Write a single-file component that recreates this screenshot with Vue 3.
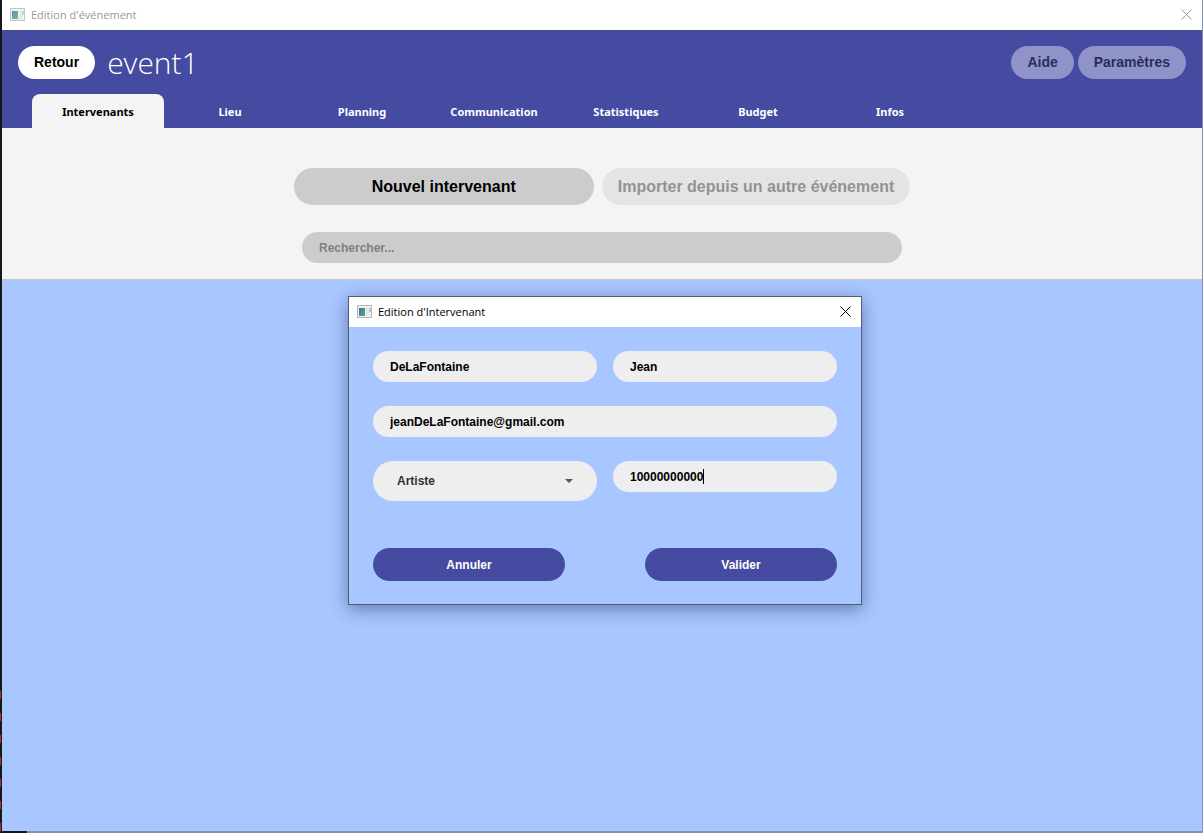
<template>
    <div class="desktop">
        <main class="window">
            <header class="titlebar">
                <svg class="app-icon" viewBox="0 0 15 13" aria-hidden="true">
                    <rect x="0" y="0" width="15" height="13" fill="#b4b8bd" />
                    <rect x="1" y="1" width="13" height="11" fill="#eef0f2" />
                    <rect x="2" y="3" width="6" height="8" fill="url(#app-icon-fill)" />
                    <rect x="9" y="3" width="3" height="8" fill="#e2e4e6" />
                    <rect x="12" y="3" width="2" height="4" fill="#a9d4c0" />
                    <defs>
                        <linearGradient id="app-icon-fill" x1="0" y1="0" x2="1" y2="1">
                            <stop offset="0" stop-color="#3f6f9c" />
                            <stop offset="1" stop-color="#5aa583" />
                        </linearGradient>
                    </defs>
                </svg>
                <span class="titlebar-text">Edition d'événement</span>
                <button class="close" type="button" aria-label="Fermer">
                    <svg viewBox="0 0 11 11" aria-hidden="true"><path d="M.5 .5L10.5 10.5M10.5 .5L.5 10.5" /></svg>
                </button>
            </header>

            <section class="banner">
                <div class="banner-row">
                    <button class="pill" type="button">Retour</button>
                    <h1>event1</h1>
                    <div class="banner-actions">
                        <button class="pill" type="button" disabled>Aide</button>
                        <button class="pill" type="button" disabled>Paramètres</button>
                    </div>
                </div>
                <nav class="tabs">
                    <a v-for="tab in tabs" :key="tab" href="#" :class="{ active: tab === activeTab }" @click.prevent="activeTab = tab">{{ tab }}</a>
                </nav>
            </section>

            <section class="toolbar">
                <div class="toolbar-buttons">
                    <button class="action action-new" type="button">Nouvel intervenant</button>
                    <button class="action" type="button" disabled>Importer depuis un autre événement</button>
                </div>
                <input class="search" type="search" v-model="search" placeholder="Rechercher..." aria-label="Rechercher" />
            </section>

            <section class="content"></section>
        </main>

        <section class="dialog" role="dialog" aria-labelledby="dialog-title">
            <header class="titlebar">
                <svg class="app-icon" viewBox="0 0 15 13" aria-hidden="true">
                    <rect x="0" y="0" width="15" height="13" fill="#b4b8bd" />
                    <rect x="1" y="1" width="13" height="11" fill="#eef0f2" />
                    <rect x="2" y="3" width="6" height="8" fill="url(#app-icon-fill)" />
                    <rect x="9" y="3" width="3" height="8" fill="#e2e4e6" />
                    <rect x="12" y="3" width="2" height="4" fill="#a9d4c0" />
                </svg>
                <span id="dialog-title" class="titlebar-text">Edition d'Intervenant</span>
                <button class="close" type="button" aria-label="Fermer">
                    <svg viewBox="0 0 11 11" aria-hidden="true"><path d="M.5 .5L10.5 10.5M10.5 .5L.5 10.5" /></svg>
                </button>
            </header>
            <form class="form" @submit.prevent>
                <input class="field" v-model="form.nom" type="text" aria-label="Nom" />
                <input class="field" v-model="form.prenom" type="text" aria-label="Prénom" />
                <input class="field field-wide" v-model="form.email" type="email" aria-label="Email" />
                <div class="select-box">
                    <select v-model="form.role" aria-label="Rôle">
                        <option>Artiste</option>
                    </select>
                    <svg viewBox="0 0 8 4" aria-hidden="true"><path d="M0 0H8L4 4Z" /></svg>
                </div>
                <div class="phone">
                    <input class="field" v-model="form.telephone" type="tel" aria-label="Téléphone" />
                    <span class="caret" :style="{ left: `calc(17px + ${form.telephone.length}ch)` }"></span>
                </div>
                <div class="form-actions">
                    <button type="button">Annuler</button>
                    <button type="submit">Valider</button>
                </div>
            </form>
        </section>
    </div>
</template>

<script setup>
import { ref, reactive } from 'vue';

const tabs = ['Intervenants', 'Lieu', 'Planning', 'Communication', 'Statistiques', 'Budget', 'Infos'];
const activeTab = ref('Intervenants');
const search = ref('');

const form = reactive({
    nom: 'DeLaFontaine',
    prenom: 'Jean',
    email: 'jeanDeLaFontaine@gmail.com',
    role: 'Artiste',
    telephone: '10000000000',
});
</script>

<style>
body {
    margin: 0;
}
</style>

<style scoped>
* {
    box-sizing: border-box;
}

.desktop {
    position: relative;
    display: flex;
    min-height: 100vh;
    padding: 0 1px 2px 2px;
    font-family: "Liberation Sans", Arial, sans-serif;
    /* terminal derrière la fenêtre : texte rouge à gauche, bord gris-bleu en bas */
    background:
        repeating-linear-gradient(#a83330 0 8px, #17171d 8px 22px) 0 100% / 1px 142px no-repeat,
        linear-gradient(#17171d, #17171d) 0 100% / 27px 2px no-repeat,
        linear-gradient(#8492b0, #8492b0) 0 100% / 100% 2px no-repeat,
        linear-gradient(#8492b0, #8492b0) 100% 0 / 1px 100% no-repeat,
        #17171d;
}

button,
input,
select {
    margin: 0;
    border: 0;
    font-family: inherit;
    font-weight: bold;
    outline: none;
}

.window {
    flex: 1;
    display: flex;
    flex-direction: column;
    background: #a8c6ff;
}

.titlebar {
    display: flex;
    align-items: center;
    height: 30px;
    padding: 0 10px 2px 8px;
    background: #fff;
    color: #999;
    font-family: "Open Sans", "Segoe UI", sans-serif;
    font-size: 11px;
}

.app-icon {
    width: 15px;
    height: 13px;
    margin-right: 6px;
}

.window > .titlebar .app-icon {
    opacity: 0.8;
}

.titlebar-text {
    flex: 1;
}

.close {
    display: flex;
    padding: 0;
    background: none;
    color: inherit;
}

.close svg {
    width: 11px;
    height: 11px;
    fill: none;
    stroke: currentColor;
}

.banner {
    padding: 16px 16px 0;
    background: #454ba1;
}

.banner-row {
    display: flex;
    align-items: center;
    height: 33px;
}

.pill {
    height: 33px;
    padding: 0 16px 1px;
    border-radius: 17px;
    background: #fff;
    color: #000;
    font-size: 14px;
}

.pill:disabled {
    background: #8f93c8;
    color: #292d61;
}

h1 {
    margin: 0 0 0 12px;
    color: #fff;
    font-family: "Open Sans", "Segoe UI", sans-serif;
    font-size: 30px;
    font-weight: 300;
}

.banner-actions {
    display: flex;
    gap: 4px;
    margin-left: auto;
}

.tabs {
    display: flex;
    padding: 15px 14px 0;
}

.tabs a {
    width: 132px;
    height: 34px;
    border-radius: 8px 8px 0 0;
    color: #fff;
    font-family: "Noto Sans", "Segoe UI", sans-serif;
    font-size: 11px;
    font-weight: bold;
    line-height: 35px;
    text-align: center;
    text-decoration: none;
}

.tabs a.active {
    background: #f4f4f4;
    color: #000;
}

.toolbar {
    display: flex;
    flex-direction: column;
    align-items: center;
    gap: 27px;
    padding: 40px 16px 16px;
    border-bottom: 1px solid #c8c8c8;
    background: #f4f4f4;
}

.toolbar-buttons {
    display: flex;
    gap: 8px;
}

.action {
    height: 37px;
    padding: 0 16px;
    border-radius: 19px;
    background: #ccc;
    color: #000;
    font-size: 16px;
}

.action-new {
    width: 300px;
}

.action:disabled {
    background: #e4e4e4;
    color: #929292;
}

.search {
    width: 600px;
    max-width: 100%;
    height: 31px;
    padding: 0 17px;
    border-radius: 16px;
    background: #ccc;
    font-size: 12px;
    appearance: none;
}

.search::placeholder {
    color: #808080;
    opacity: 1;
}

.content {
    flex: 1;
}

.dialog {
    position: absolute;
    top: 296px;
    left: 348px;
    width: 514px;
    border: 1px solid #535c72;
    background: #a8c6ff;
    box-shadow: 0 4px 16px rgba(20, 30, 70, 0.45);
}

.dialog .titlebar {
    color: #000;
}

.form {
    display: grid;
    grid-template-columns: 1fr 1fr;
    align-items: start;
    gap: 24px 16px;
    padding: 24px 24px 23px;
}

.field {
    display: block;
    width: 100%;
    height: 31px;
    padding: 0 17px;
    border-radius: 16px;
    background: #eee;
    color: #000;
    font-size: 12px;
}

.field-wide {
    grid-column: 1 / -1;
}

.select-box {
    position: relative;
}

.select-box select {
    width: 100%;
    height: 40px;
    padding: 0 24px;
    border-radius: 20px;
    background: #eee;
    color: #333;
    font-size: 12px;
    appearance: none;
}

.select-box svg {
    position: absolute;
    top: 18px;
    right: 24px;
    width: 8px;
    height: 4px;
    fill: #555;
    pointer-events: none;
}

.phone {
    position: relative;
    font-size: 12px;
    font-weight: bold;
}

.caret {
    position: absolute;
    top: 8px;
    width: 1px;
    height: 15px;
    background: #000;
}

.form-actions {
    display: flex;
    grid-column: 1 / -1;
    justify-content: space-between;
    padding-top: 23px;
}

.form-actions button {
    width: 192px;
    height: 33px;
    border-radius: 17px;
    background: #454ba1;
    color: #fff;
    font-size: 12px;
}
</style>
